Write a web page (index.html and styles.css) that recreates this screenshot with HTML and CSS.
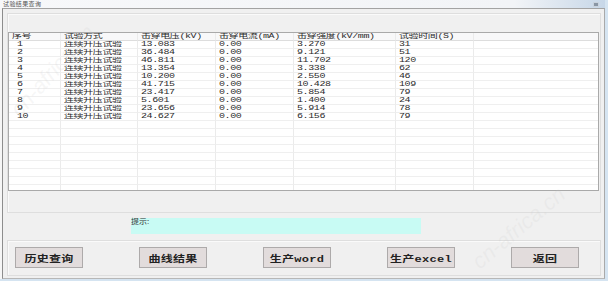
FILE: index.html
```html
<!DOCTYPE html>
<html>
<head>
<meta charset="utf-8">
<title>试验结果查询</title>
<link rel="stylesheet" href="styles.css">
</head>
<body>
<div class="window">
  <div class="titlebar"><span class="title">试验结果查询</span><span class="tb-icon"></span></div>
  <div class="client">
    <div class="panel upper">
      <div class="grid">
        <div class="row head">
          <div class="c c1"><span class="tx">序号</span></div>
          <div class="c"><span class="tx">试验方式</span></div>
          <div class="c"><span class="tx">击穿电压(kV)</span></div>
          <div class="c"><span class="tx">击穿电流(mA)</span></div>
          <div class="c"><span class="tx">击穿强度(kV/mm)</span></div>
          <div class="c"><span class="tx">试验时间(S)</span></div>
          <div class="c"></div>
        </div>
        <div class="row"><div class="c c1"><span class="tx">1</span></div><div class="c"><span class="tx">连续升压试验</span></div><div class="c"><span class="tx">13.083</span></div><div class="c"><span class="tx">0.00</span></div><div class="c"><span class="tx">3.270</span></div><div class="c"><span class="tx">31</span></div><div class="c"></div></div>
        <div class="row"><div class="c c1"><span class="tx">2</span></div><div class="c"><span class="tx">连续升压试验</span></div><div class="c"><span class="tx">36.484</span></div><div class="c"><span class="tx">0.00</span></div><div class="c"><span class="tx">9.121</span></div><div class="c"><span class="tx">51</span></div><div class="c"></div></div>
        <div class="row"><div class="c c1"><span class="tx">3</span></div><div class="c"><span class="tx">连续升压试验</span></div><div class="c"><span class="tx">46.811</span></div><div class="c"><span class="tx">0.00</span></div><div class="c"><span class="tx">11.702</span></div><div class="c"><span class="tx">120</span></div><div class="c"></div></div>
        <div class="row"><div class="c c1"><span class="tx">4</span></div><div class="c"><span class="tx">连续升压试验</span></div><div class="c"><span class="tx">13.354</span></div><div class="c"><span class="tx">0.00</span></div><div class="c"><span class="tx">3.338</span></div><div class="c"><span class="tx">62</span></div><div class="c"></div></div>
        <div class="row"><div class="c c1"><span class="tx">5</span></div><div class="c"><span class="tx">连续升压试验</span></div><div class="c"><span class="tx">10.200</span></div><div class="c"><span class="tx">0.00</span></div><div class="c"><span class="tx">2.550</span></div><div class="c"><span class="tx">46</span></div><div class="c"></div></div>
        <div class="row"><div class="c c1"><span class="tx">6</span></div><div class="c"><span class="tx">连续升压试验</span></div><div class="c"><span class="tx">41.715</span></div><div class="c"><span class="tx">0.00</span></div><div class="c"><span class="tx">10.428</span></div><div class="c"><span class="tx">109</span></div><div class="c"></div></div>
        <div class="row"><div class="c c1"><span class="tx">7</span></div><div class="c"><span class="tx">连续升压试验</span></div><div class="c"><span class="tx">23.417</span></div><div class="c"><span class="tx">0.00</span></div><div class="c"><span class="tx">5.854</span></div><div class="c"><span class="tx">79</span></div><div class="c"></div></div>
        <div class="row"><div class="c c1"><span class="tx">8</span></div><div class="c"><span class="tx">连续升压试验</span></div><div class="c"><span class="tx">5.601</span></div><div class="c"><span class="tx">0.00</span></div><div class="c"><span class="tx">1.400</span></div><div class="c"><span class="tx">24</span></div><div class="c"></div></div>
        <div class="row"><div class="c c1"><span class="tx">9</span></div><div class="c"><span class="tx">连续升压试验</span></div><div class="c"><span class="tx">23.656</span></div><div class="c"><span class="tx">0.00</span></div><div class="c"><span class="tx">5.914</span></div><div class="c"><span class="tx">78</span></div><div class="c"></div></div>
        <div class="row"><div class="c c1"><span class="tx">10</span></div><div class="c"><span class="tx">连续升压试验</span></div><div class="c"><span class="tx">24.627</span></div><div class="c"><span class="tx">0.00</span></div><div class="c"><span class="tx">6.156</span></div><div class="c"><span class="tx">79</span></div><div class="c"></div></div>
        <div class="row"><div class="c c1"></div><div class="c"></div><div class="c"></div><div class="c"></div><div class="c"></div><div class="c"></div><div class="c"></div></div>
        <div class="row"><div class="c c1"></div><div class="c"></div><div class="c"></div><div class="c"></div><div class="c"></div><div class="c"></div><div class="c"></div></div>
        <div class="row"><div class="c c1"></div><div class="c"></div><div class="c"></div><div class="c"></div><div class="c"></div><div class="c"></div><div class="c"></div></div>
        <div class="row"><div class="c c1"></div><div class="c"></div><div class="c"></div><div class="c"></div><div class="c"></div><div class="c"></div><div class="c"></div></div>
        <div class="row"><div class="c c1"></div><div class="c"></div><div class="c"></div><div class="c"></div><div class="c"></div><div class="c"></div><div class="c"></div></div>
        <div class="row"><div class="c c1"></div><div class="c"></div><div class="c"></div><div class="c"></div><div class="c"></div><div class="c"></div><div class="c"></div></div>
        <div class="row"><div class="c c1"></div><div class="c"></div><div class="c"></div><div class="c"></div><div class="c"></div><div class="c"></div><div class="c"></div></div>
        <div class="row"><div class="c c1"></div><div class="c"></div><div class="c"></div><div class="c"></div><div class="c"></div><div class="c"></div><div class="c"></div></div>
        <div class="row"><div class="c c1"></div><div class="c"></div><div class="c"></div><div class="c"></div><div class="c"></div><div class="c"></div><div class="c"></div></div>
      </div>
    </div>
    <div class="prompt"><span class="ptx">提示:</span></div>
    <div class="panel lower">
      <button class="btn"><span class="bt">历史查询</span></button>
      <button class="btn"><span class="bt">曲线结果</span></button>
      <button class="btn"><span class="bt">生产word</span></button>
      <button class="btn"><span class="bt">生产excel</span></button>
      <button class="btn"><span class="bt">返回</span></button>
    </div>
  </div>
</div>
<div class="wm wm1">cn-africa.cn</div>
<div class="wm wm2">cn-africa.cn</div>
</body>
</html>
```

FILE: styles.css
```css
* { box-sizing: border-box; }
html, body { margin: 0; padding: 0; }
body {
  width: 608px;
  height: 281px;
  overflow: hidden;
  position: relative;
  background: #d5e4f1;
  font-family: "Liberation Mono", "Noto Sans CJK SC", monospace;
  color: #1e1e1e;
}
.window {
  width: 605px;
  height: 279px;
  background: #f6f6f6;
  display: flex;
  flex-direction: column;
}
.titlebar {
  height: 8px;
  flex: none;
  display: flex;
  align-items: center;
  justify-content: space-between;
  padding: 0 6px 0 3px;
  background: linear-gradient(to right, #f7f8fa 0%, #f2f4f7 85%, #c7d7e8 100%);
}
.title {
  font-family: "Noto Sans CJK SC", sans-serif;
  font-size: 6px;
  line-height: 8px;
  letter-spacing: 0.4px;
  color: #555;
}
.tb-icon {
  width: 6px;
  height: 5px;
  background: #8a96a4;
  border: 1px solid #c9d3de;
}
.client {
  flex: 1;
  margin-left: 2px;
  background: #f0f0f0;
  border-left: 1px solid #8d8d8d;
  border-top: 1px solid #a3a3a3;
  border-right: 1px solid #a9a9a9;
  border-bottom: 1px solid #b7b7b7;
  padding: 4px 3px 0 4px;
  display: flex;
  flex-direction: column;
}
.panel {
  border: 1px solid #dedede;
  box-shadow: inset 1px 1px 0 #fafafa;
}
.upper {
  height: 200px;
  padding: 18px 1px 0 0;
}
.grid {
  height: 159px;
  background: #fff;
  border: 1px solid #a9a9a9;
  overflow: hidden;
}
.row {
  display: grid;
  grid-template-columns: 52px 77px 78px 78px 102px 78px 1fr;
  height: 8px;
}
.c {
  height: 8px;
  border-right: 1px solid #ebebeb;
  border-bottom: 1px solid #efefef;
  padding-left: 3px;
  font-size: 10px;
  letter-spacing: -0.4px;
  line-height: 7px;
  white-space: nowrap;
  overflow: hidden;
}
.c:last-child { border-right: none; }
.c1 { padding-left: 8px; }
.head .c { background: #f8f8f9; border-bottom-color: #dddddd; }
.head .c1 { padding-left: 3px; }
.tx {
  display: inline-block;
  transform: scaleY(0.66);
  transform-origin: left center;
  color: #2a2a2a;
}
.prompt {
  margin: 5px 0 0 124px;
  width: 290px;
  height: 16px;
  background: #c8fbf4;
  font-size: 8px;
  line-height: 8px;
}
.ptx {
  display: inline-block;
  transform: scaleY(0.8);
  transform-origin: left top;
  font-family: "Noto Sans CJK SC", sans-serif;
  color: #333;
  padding-top: 1px;
}
.lower {
  margin-top: 6px;
  height: 36px;
  padding: 6px 0 0 7px;
  display: flex;
  gap: 56px;
  align-items: flex-start;
}
.btn {
  width: 68px;
  height: 21px;
  padding: 0;
  margin: 0;
  background: #e2dcdc;
  border: 1px solid #adaaaa;
  border-radius: 0;
  font-family: "Liberation Mono", "Noto Sans CJK SC", monospace;
  font-size: 12px;
  font-weight: bold;
  letter-spacing: 0.3px;
  color: #222;
  display: flex;
  align-items: center;
  justify-content: center;
}
.bt {
  display: inline-block;
  transform: scaleY(0.75);
}
.wm {
  position: absolute;
  font-family: "Liberation Sans", sans-serif;
  font-style: italic;
  font-size: 22px;
  color: rgba(200, 200, 200, 0.16);
  white-space: nowrap;
  pointer-events: none;
}
.wm1 { left: -4px; top: 58px; transform: rotate(-48deg); }
.wm2 { left: 462px; top: 215px; transform: rotate(-40deg); }
```
